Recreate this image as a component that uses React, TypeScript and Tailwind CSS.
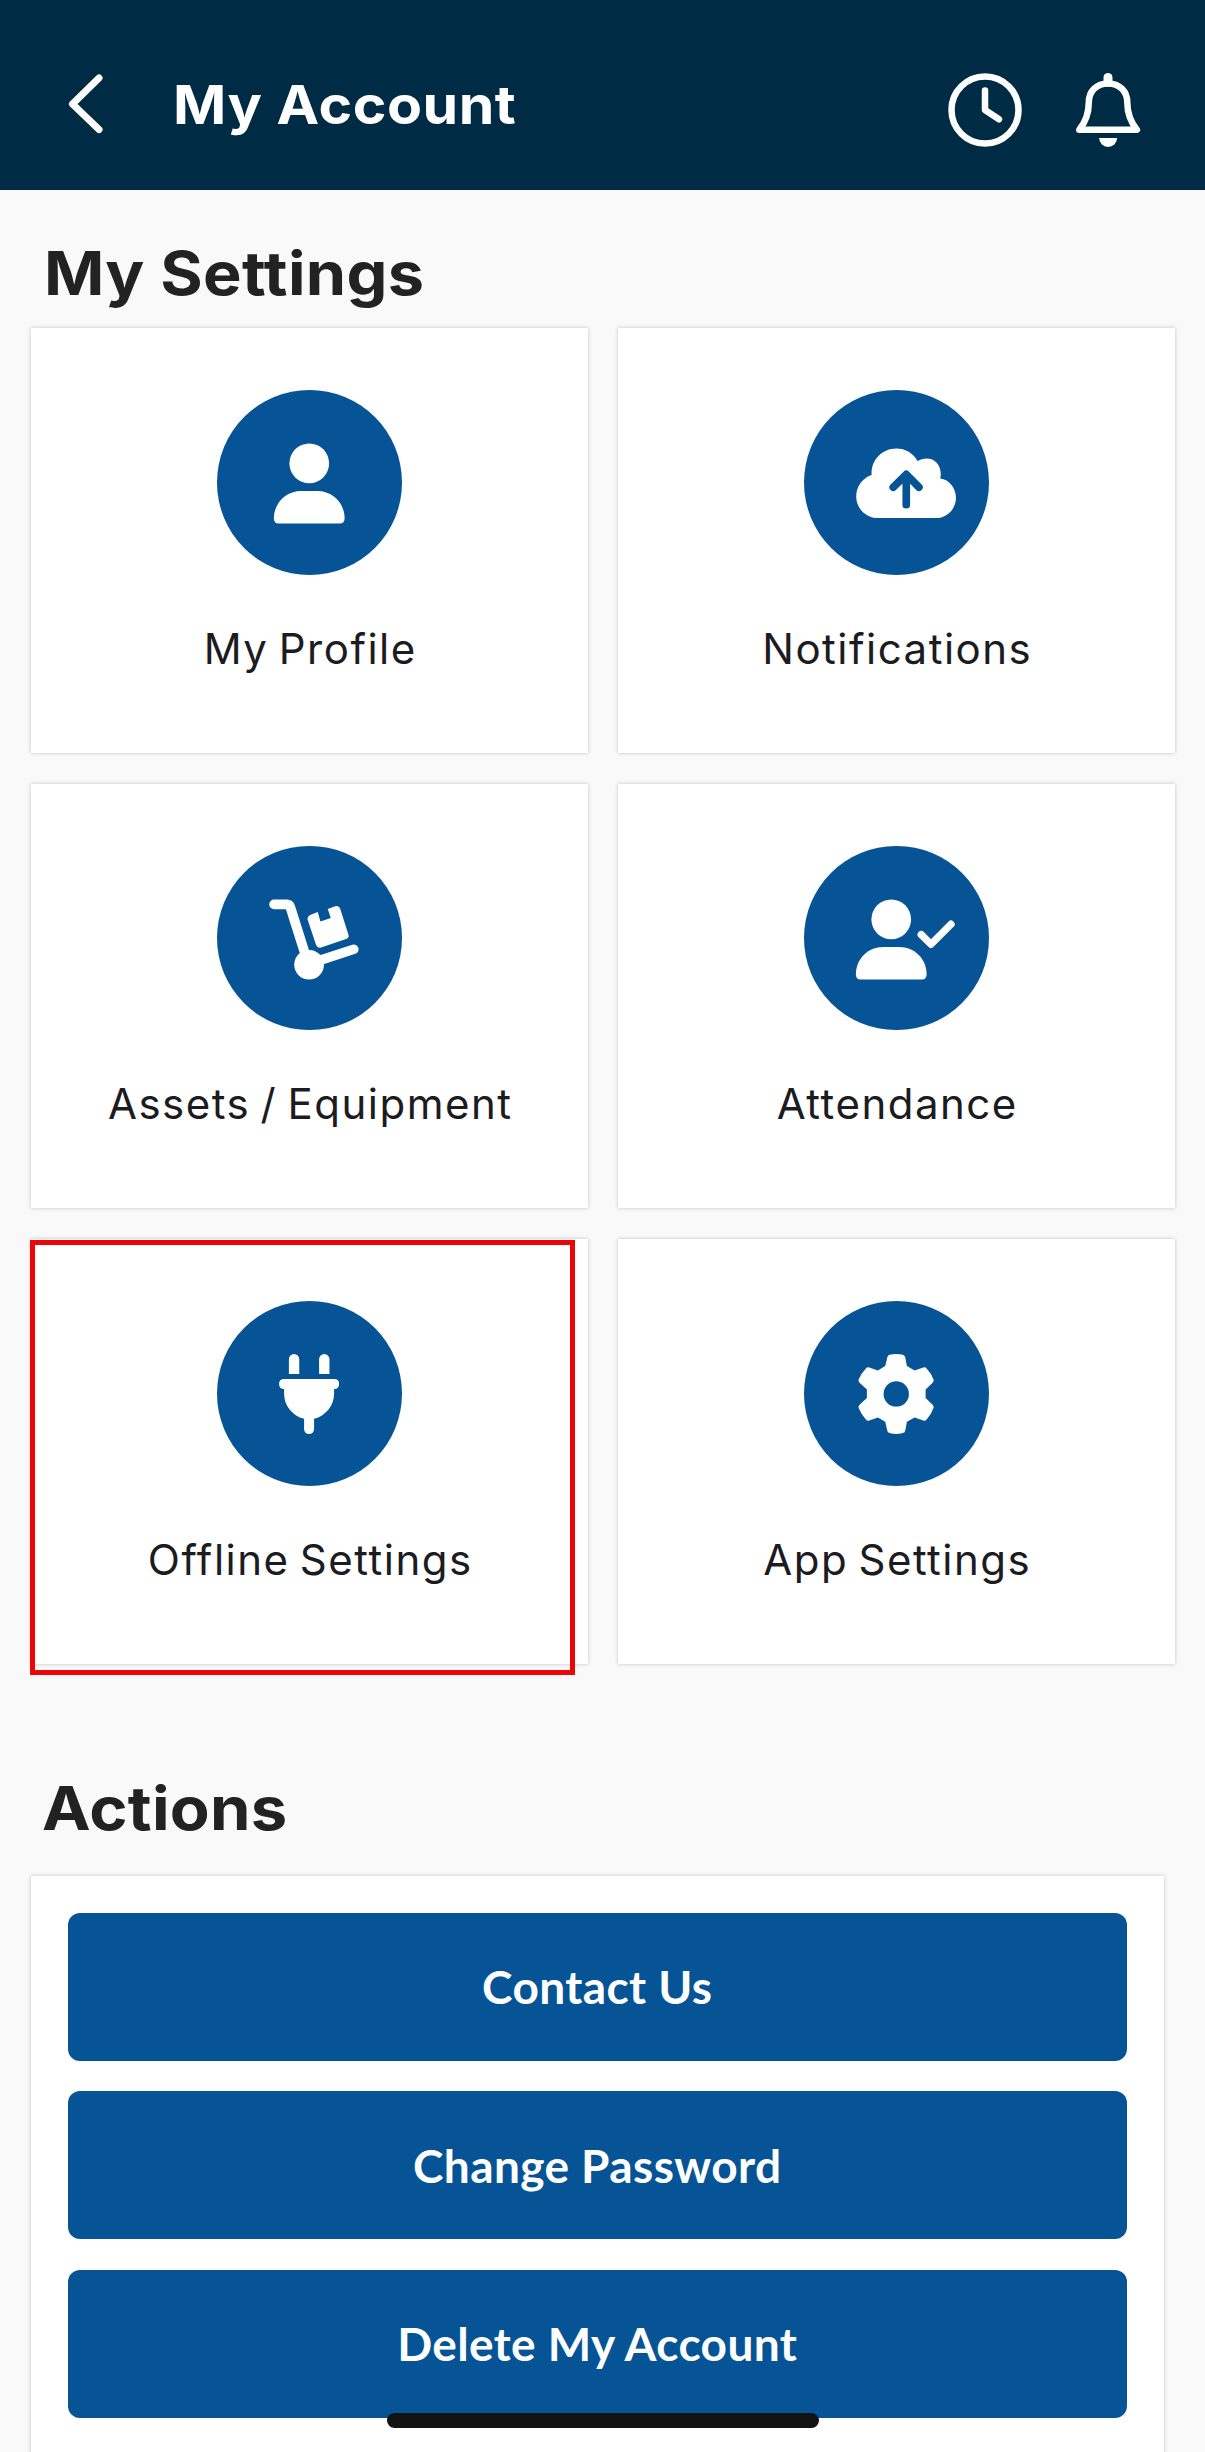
import type { ReactNode } from "react";

const UserShape = () => (
  <>
    <circle cx="276" cy="220" r="59.500" />
    <path d="M170 385c0-46 36-82 82-82h48c46 0 82 36 82 82c0 9-5 15-14 15H184c-9 0-14-6-14-15z" />
  </>
);

const icons: Record<string, ReactNode> = {
  profile: (
    <g transform="translate(0.500 0)">
      <UserShape />
    </g>
  ),
  cloud: (
    <g transform="translate(-193.5 -60)">
      <path d="M415 444c-36 0-65-29-65-65c0-30 19-55 46-64v-6c0-41 33-74 74-74c28 0 51 14 64 38c8-5 17-8 27-8c28 0 48 25 41 60c27 3 47 29 47 58c0 34-27 61-60 61z" />
      <path d="M500 404V314M461 351.500L500 313L538 351.500" fill="none" stroke="#065496" strokeWidth="23" strokeLinecap="round" strokeLinejoin="round" />
    </g>
  ),
  dolly: (
    <g transform="translate(-382 -76)">
      <path d="M553 251H592Q599 251 602 260L645 396" fill="none" stroke="white" strokeWidth="29" strokeLinecap="round" />
      <path d="M690 419L792 385.500" stroke="white" strokeWidth="29" strokeLinecap="round" />
      <circle cx="658" cy="432" r="44.500" />
      <path d="M663 282L684 274L692 302L723 292L714 265L734 257Q747 253 752 266L776 342Q779 351 769 355L694 380Q683 383 679 373L654 298Q651 287 663 282Z" />
    </g>
  ),
  attendance: (
    <>
      <g transform="translate(-14.5 0)">
        <UserShape />
      </g>
      <path d="M351.500 265.500L380.500 294.500L440.500 234.500" fill="none" stroke="white" strokeWidth="22" strokeLinecap="round" strokeLinejoin="round" />
    </>
  ),
  plug: (
    <g transform="translate(-592 -333)">
      <path d="M807.500 552V507a15.500 15.500 0 0 1 31 0v45zM898 552V507a15.500 15.500 0 0 1 31 0v45z" />
      <path d="M793 567H943Q958 567 958 582T943 597V610C943 648 917 677 883 686V717a15 15 0 0 1-30 0V686C819 677 793 648 793 610V597Q778 597 778 582T793 567Z" />
    </g>
  ),
  gear: (
    <g transform="translate(-193.500 -64)">
      <path
        fillRule="evenodd"
        d="M450 225Q470 220 490 225Q496 227 497 233L502 259L525 272L551 263Q557 261 561 266Q575 280 582 300Q583 305 579 309L558 329V355L579 375Q583 379 582 384Q575 404 561 419Q557 424 551 422L525 413L502 426L497 452Q496 458 490 460Q470 465 450 460Q444 458 443 452L437 426L415 413L389 422Q383 424 379 419Q365 404 357 384Q356 379 360 375L382 355V329L360 309Q356 305 357 300Q365 280 379 266Q383 261 389 263L415 272L437 259L443 233Q444 227 450 225ZM470 304.500a38 38 0 1 0 0 76a38 38 0 1 0 0-76Z"
      />
    </g>
  ),
};

const tiles = [
  { label: "My Profile", icon: "profile" },
  { label: "Notifications", icon: "cloud" },
  { label: "Assets / Equipment", icon: "dolly" },
  { label: "Attendance", icon: "attendance" },
  { label: "Offline Settings", icon: "plug", highlighted: true },
  { label: "App Settings", icon: "gear" },
];

const actions = ["Contact Us", "Change Password", "Delete My Account"];

function Header() {
  return (
    <header className="flex h-[190px] items-start bg-[#002b44] text-white">
      <svg className="ml-[66px] mt-[71px] h-[65px] w-[40px]" viewBox="0 0 40 65" fill="none" stroke="currentColor" strokeWidth="7" strokeLinecap="round" strokeLinejoin="round">
        <path d="M33 7L6.500 33L33 58.500" />
      </svg>
      <h1 className="ml-[67px] mt-[73px] origin-left scale-x-[1.06] whitespace-nowrap font-['Inter'] text-[54px] font-bold leading-[64px] tracking-[0.5px]">
        My Account
      </h1>
      <div className="ml-auto mr-[62.300px] mt-[70px] flex gap-[47.700px]">
        <svg className="h-20 w-20" viewBox="945 70 80 80" fill="none" stroke="currentColor" strokeWidth="6.500" strokeLinecap="round" strokeLinejoin="round">
          <circle cx="985" cy="110" r="33.500" />
          <path d="M985 90.500V110L999 119.300" />
        </svg>
        <svg className="h-20 w-[70px]" viewBox="1072.700 70 70 80" fill="none" stroke="currentColor" strokeWidth="6.500" strokeLinecap="round" strokeLinejoin="round">
          <path d="M1079 129.700C1086 121 1088.500 113 1088.500 102.500C1088.500 91 1096.500 83.500 1107.700 83.500S1127 91 1127 102.500C1127 113 1129.500 121 1136.600 129.700Z" />
          <path d="M1107.700 82V77.500" strokeWidth="9" />
          <path d="M1098.800 138H1116.800A9 9 0 0 1 1098.800 138Z" fill="currentColor" stroke="none" />
        </svg>
      </div>
    </header>
  );
}

function Tile({ label, icon, highlighted }: { label: string; icon: string; highlighted?: boolean }) {
  return (
    <div className="relative flex h-[424.500px] flex-col items-center bg-white pt-[62px] shadow-[0_0_4px_rgba(0,0,0,0.22)]">
      <div className="size-[184.500px] shrink-0 rounded-full bg-[#065496]">
        <svg className="size-full" viewBox="0 0 553 553" fill="white">
          {icons[icon]}
        </svg>
      </div>
      <span className="ml-[2px] mt-[48px] whitespace-nowrap font-['Inter'] text-[42px] leading-[52px] tracking-[1.500px] [word-spacing:-3px] text-[#1c1b1f]">
        {label}
      </span>
      {highlighted && <div className="absolute -left-px top-px h-[435px] w-[545px] border-[5px] border-[#ed0606]" />}
    </div>
  );
}

export default function App() {
  return (
    <div className="relative h-[2452px] w-[1205px] overflow-hidden bg-[#f9f9f9] font-['Inter',sans-serif]">
      <Header />
      <main>
        <h2 className="ml-[44px] mt-[47px] origin-left scale-x-[1.08] text-[60px] font-bold leading-[72px] tracking-[0.300px] text-[#222222]">My Settings</h2>
        <div className="ml-[31px] mt-[19px] grid w-[1143.500px] grid-cols-2 gap-x-[30.500px] gap-y-[31px]">
          {tiles.map((tile) => (
            <Tile key={tile.label} {...tile} />
          ))}
        </div>
        <h2 className="ml-[42px] mt-[108px] origin-left scale-x-[1.085] text-[60px] font-bold leading-[72px] tracking-[0.200px] text-[#222222]">Actions</h2>
        <div className="ml-[31px] mt-[32px] flex h-[620px] w-[1132.500px] flex-col gap-[30.500px] bg-white px-[36.500px] pt-[37px] shadow-[0_0_4px_rgba(0,0,0,0.22)]">
          {actions.map((action) => (
            <button key={action} className="h-[148px] w-full shrink-0 rounded-xl bg-[#065496] pt-px font-['Lato'] text-[46px] font-bold leading-none tracking-[0.400px] text-white">
              {action}
            </button>
          ))}
        </div>
      </main>
      <div className="absolute left-[387px] top-[2412.500px] h-[15.500px] w-[432px] rounded-full bg-[#131313]" />
    </div>
  );
}
